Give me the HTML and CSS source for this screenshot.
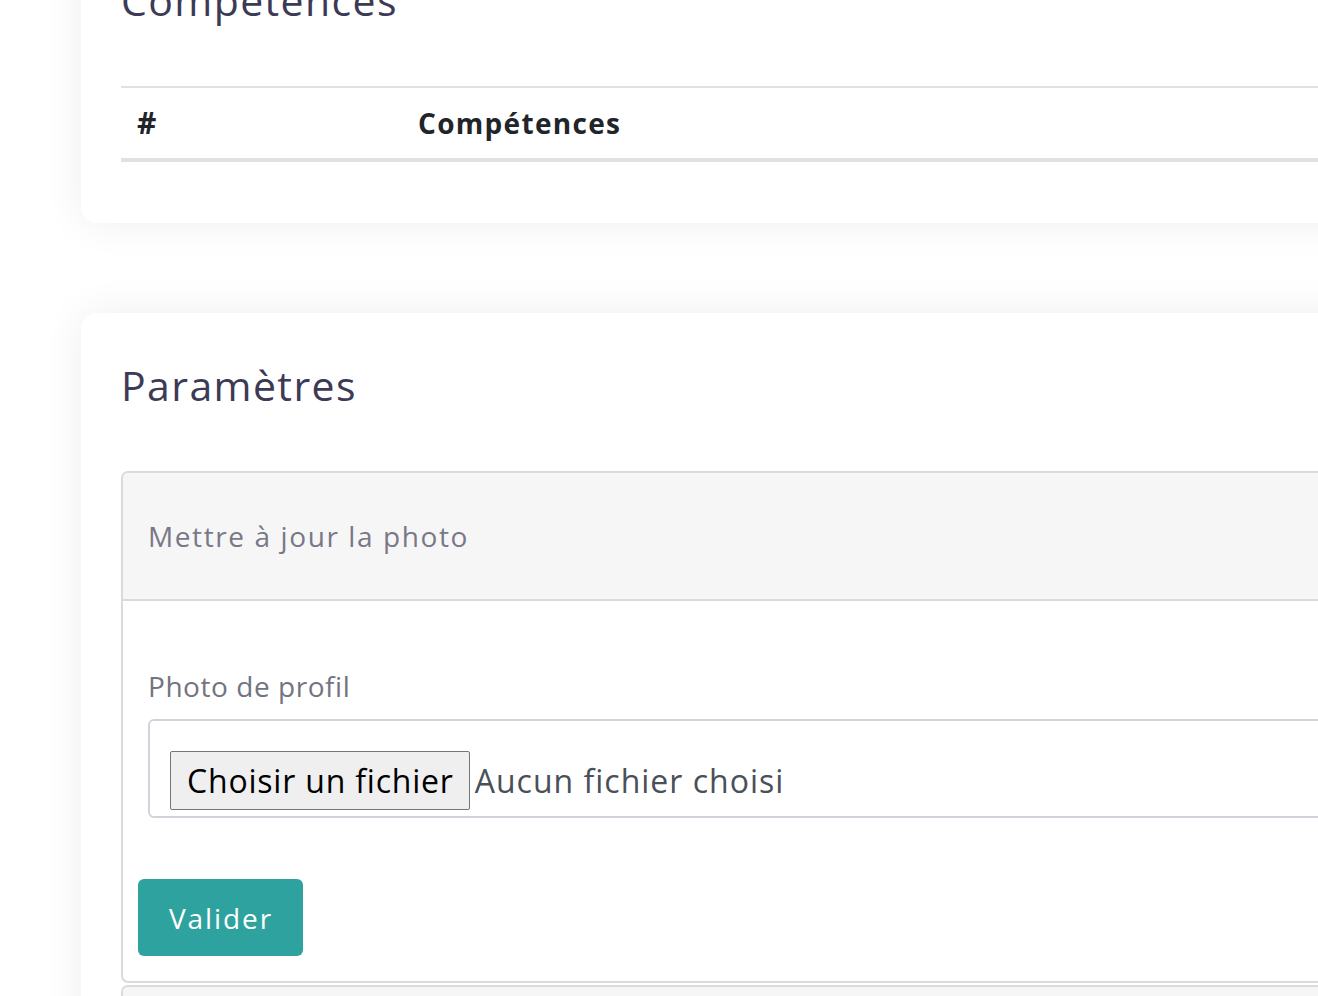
FILE: index.html
```html
<!DOCTYPE html>
<html lang="fr">
<head>
<meta charset="utf-8">
<title>Profil</title>
<link rel="stylesheet" href="styles.css">
</head>
<body>
<div class="page">
  <section class="panel panel-skills">
    <h2 class="panel-title">Compétences</h2>
    <table class="table">
      <thead>
        <tr>
          <th class="col-num">#</th>
          <th>Compétences</th>
        </tr>
      </thead>
    </table>
  </section>

  <section class="panel panel-settings">
    <h2 class="panel-title">Paramètres</h2>
    <div class="card">
      <div class="card-header">Mettre à jour la photo</div>
      <div class="card-body">
        <div class="form-group">
          <label class="form-label">Photo de profil</label>
          <div class="file-control">
            <span class="file-btn">Choisir un fichier</span>
            <span class="file-name">Aucun fichier choisi</span>
          </div>
        </div>
        <button class="btn-submit" type="button">Valider</button>
      </div>
    </div>
    <div class="card card-next">
      <div class="card-header card-header-empty"></div>
    </div>
  </section>
</div>
</body>
</html>
```

FILE: styles.css
```css
html, body {
  margin: 0;
  padding: 0;
  background: #ffffff;
  overflow: hidden;
  height: 996px;
}

body {
  font-family: "Open Sans", "Liberation Sans", sans-serif;
  font-size: 28px;
  line-height: 42px;
  color: #212529;
}

.page {
  margin-top: -72px;
  padding-left: 81px;
  width: 1500px;
}

.panel {
  background: #ffffff;
  border-radius: 16px;
  box-shadow: 0 0 40px rgba(0, 0, 0, 0.07);
  padding: 48px 40px 61px;
}

.panel-settings {
  margin-top: 90px;
  padding-bottom: 40px;
}

.panel-title {
  margin: 0 0 62px;
  font-size: 41px;
  line-height: 48px;
  font-weight: 400;
  letter-spacing: 1.4px;
  color: #3c3a55;
}

.table {
  width: 100%;
  border-collapse: collapse;
}

.table th {
  text-align: left;
  font-weight: 700;
  color: #212529;
  padding: 14px 16px;
  letter-spacing: 1.3px;
  border-top: 2px solid #dee2e6;
  border-bottom: 4px solid #dee2e6;
}

.table .col-num {
  width: 249px;
  font-size: 30px;
}

.card {
  border: 2px solid #dadada;
  border-radius: 7px;
  background: #fff;
}

.card-header {
  background: #f6f6f6;
  border-bottom: 2px solid #dadada;
  padding: 42px 25px;
  color: #787889;
  letter-spacing: 1.6px;
  border-radius: 5px 5px 0 0;
}

.card-body {
  padding: 64px 25px 25px 15px;
}

.form-group {
  padding-left: 10px;
}

.form-label {
  display: block;
  color: #73747f;
  letter-spacing: 0.55px;
  margin-bottom: 12px;
}

.file-control {
  border: 2px solid #ced4da;
  border-radius: 6px;
  padding: 30px 20px 6px;
  display: flex;
  align-items: center;
  gap: 5px;
  font-size: 32px;
}

.file-btn {
  display: inline-block;
  background: #efefef;
  border: 1px solid #767676;
  border-radius: 2px;
  padding: 8px 15px 7px 16px;
  line-height: 42px;
  letter-spacing: 0.8px;
  color: #000;
}

.file-name {
  color: #495057;
  letter-spacing: 1px;
}

.btn-submit {
  margin-top: 61px;
  display: block;
  width: 165px;
  height: 77px;
  border: none;
  border-radius: 6px;
  background: #2ea29e;
  color: #ffffff;
  font-family: inherit;
  font-size: 28px;
  letter-spacing: 1.9px;
  text-align: left;
  padding: 0 0 0 31px;
}

.card-next {
  margin-top: 2px;
}

.card-header-empty {
  height: 60px;
  padding: 0;
}
```
